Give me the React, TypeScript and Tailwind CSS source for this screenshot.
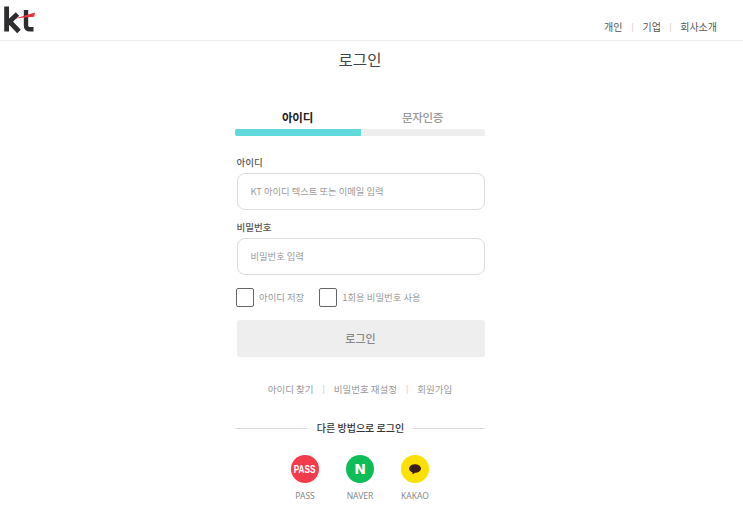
const font = { fontFamily: '"Noto Sans CJK KR", "Noto Sans", sans-serif' };

function Logo() {
  return (
    <svg width="36" height="34" viewBox="0 0 36 34" fill="none" className="block">
      <path d="M6.6 6.5V31.5" stroke="#2d2d2f" strokeWidth="4.8" />
      <path d="M7.5 23.5L17.5 14M8.5 20.5L19 31.5" stroke="#2d2d2f" strokeWidth="5" />
      <path d="M26 10V25.5Q26 29.3 30 29.3H33.5" stroke="#2d2d2f" strokeWidth="4.4" />
      <path d="M15 18.5L35 12.5L34.2 16.8L24 17.6Z" fill="#e8313c" />
    </svg>
  );
}

function Field({ label, placeholder }: { label: string; placeholder: string }) {
  return (
    <div className="flex flex-col">
      <div className="h-[22px] pl-[1.5px] text-[9.5px] leading-[22px] font-medium text-[#555]">{label}</div>
      <div className="ml-[1.5px] mr-[0.5px] flex h-[37px] items-center rounded-[8px] border border-[#dcdcdc] bg-white pl-[13px] text-[9.3px] text-[#999]">
        {placeholder}
      </div>
    </div>
  );
}

function Check({ label }: { label: string }) {
  return (
    <div className="flex items-center gap-[5px]">
      <div className="h-[19px] w-[18px] rounded-[2px] border border-[#666]" />
      <span className="text-[9.4px] text-[#999]">{label}</span>
    </div>
  );
}

function Social({ name, bg, children }: { name: string; bg: string; children: React.ReactNode }) {
  return (
    <div className="flex w-[28px] flex-col items-center">
      <div className={`flex h-[28px] w-[28px] items-center justify-center rounded-full ${bg}`}>{children}</div>
      <div className="mt-[6px] text-[8.5px] leading-[14px] whitespace-nowrap text-[#888]" style={{ fontFamily: '"Noto Sans", sans-serif' }}>{name}</div>
    </div>
  );
}

export default function App() {
  return (
    <div className="h-[519px] w-[743px] overflow-hidden bg-white" style={font}>
      <header className="flex h-[41px] items-start justify-between border-b border-[#eeeeee]">
        <Logo />
        <nav className="flex items-center pt-[19px] pr-[26px] text-[10px] leading-[16px] text-[#555]">
          <span>개인</span>
          <span className="mx-[9px] text-[8px] text-[#bbb]">|</span>
          <span>기업</span>
          <span className="mx-[8.5px] text-[8px] text-[#bbb]">|</span>
          <span>회사소개</span>
        </nav>
      </header>
      <main className="flex w-[720px] flex-col items-center">
        <h1 className="mt-[7px] text-[15.5px] leading-[22px] font-normal text-[#444]">로그인</h1>
        <div className="mt-[37px] w-[250px]">
          <div className="flex h-[22px] text-center text-[11.5px] leading-[20px] tracking-[-0.3px]">
            <div className="w-1/2 font-bold text-[#222]">아이디</div>
            <div className="w-1/2 font-medium text-[#999]">문자인증</div>
          </div>
          <div className="h-[7px] rounded-l-[2px] bg-[#eeeeee]">
            <div className="h-full w-[126px] rounded-l-[2px] bg-[#5fd9d9]" />
          </div>
          <div className="mt-[15px] flex flex-col gap-[6px]">
            <Field label="아이디" placeholder="KT 아이디 텍스트 또는 이메일 입력" />
            <Field label="비밀번호" placeholder="비밀번호 입력" />
          </div>
          <div className="mt-[13px] ml-px flex gap-[15px]">
            <Check label="아이디 저장" />
            <Check label="1회용 비밀번호 사용" />
          </div>
          <div className="mt-[13px] ml-[1.5px] mr-[0.5px] flex h-[37px] items-center justify-center rounded-[3px] bg-[#eeeeee] text-[11px] font-medium text-[#888]">
            로그인
          </div>
          <div className="mt-[24px] flex items-center justify-center text-[9.5px] leading-[16px] text-[#999]">
            <span>아이디 찾기</span>
            <span className="mx-[9px] text-[8px] text-[#bbb]">|</span>
            <span>비밀번호 재설정</span>
            <span className="mx-[9px] text-[8px] text-[#bbb]">|</span>
            <span>회원가입</span>
          </div>
          <div className="mt-[23px] flex items-center gap-[9px]">
            <div className="h-px flex-1 bg-[#dddddd]" />
            <span className="ml-px text-[10px] leading-[16px] font-medium text-[#333]">다른 방법으로 로그인</span>
            <div className="h-px flex-1 bg-[#dddddd]" />
          </div>
          <div className="mt-[19px] flex justify-center gap-[27px]">
            <Social name="PASS" bg="bg-[#f23c4c]">
              <span className="scale-x-75 text-[11px] font-bold text-white" style={{ fontFamily: '"Liberation Sans", sans-serif' }}>PASS</span>
            </Social>
            <Social name="NAVER" bg="bg-[#0fbd58]">
              <span className="text-[14px] leading-none font-black text-white" style={{ fontFamily: '"DejaVu Sans", sans-serif' }}>N</span>
            </Social>
            <Social name="KAKAO" bg="bg-[#fae100]">
              <svg width="14" height="13" viewBox="0 0 14 13">
                <ellipse cx="7" cy="5.5" rx="6" ry="4.3" fill="#3a1d1d" />
                <path d="M4.5 8.5L4.5 11.5L7.5 9.5Z" fill="#3a1d1d" />
              </svg>
            </Social>
          </div>
        </div>
      </main>
    </div>
  );
}
